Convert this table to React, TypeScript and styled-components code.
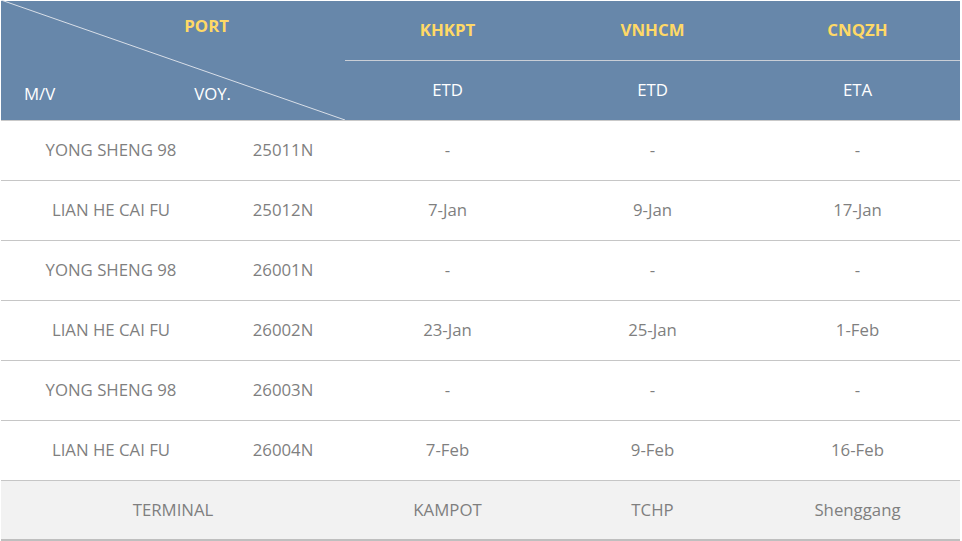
import React from "react";
import styled, { createGlobalStyle } from "styled-components";

const GlobalStyle = createGlobalStyle`
  html, body {
    margin: 0;
    padding: 0;
    background: #ffffff;
    font-family: "Open Sans", "Noto Sans", "Liberation Sans", sans-serif;
  }
`;

type Sailing = {
  vessel: string;
  voyage: string;
  khkpt: string;
  vnhcm: string;
  cnqzh: string;
};

const ports = [
  { code: "KHKPT", kind: "ETD", terminal: "KAMPOT" },
  { code: "VNHCM", kind: "ETD", terminal: "TCHP" },
  { code: "CNQZH", kind: "ETA", terminal: "Shenggang" },
];

const sailings: Sailing[] = [
  { vessel: "YONG SHENG 98", voyage: "25011N", khkpt: "-", vnhcm: "-", cnqzh: "-" },
  { vessel: "LIAN HE CAI FU", voyage: "25012N", khkpt: "7-Jan", vnhcm: "9-Jan", cnqzh: "17-Jan" },
  { vessel: "YONG SHENG 98", voyage: "26001N", khkpt: "-", vnhcm: "-", cnqzh: "-" },
  { vessel: "LIAN HE CAI FU", voyage: "26002N", khkpt: "23-Jan", vnhcm: "25-Jan", cnqzh: "1-Feb" },
  { vessel: "YONG SHENG 98", voyage: "26003N", khkpt: "-", vnhcm: "-", cnqzh: "-" },
  { vessel: "LIAN HE CAI FU", voyage: "26004N", khkpt: "7-Feb", vnhcm: "9-Feb", cnqzh: "16-Feb" },
];

export default function App() {
  return (
    <>
      <GlobalStyle />
      <Page>
        <Schedule>
          <SlashCell>
            <SlashLine viewBox="0 0 100 100" preserveAspectRatio="none">
              <line x1="0" y1="0" x2="100" y2="100" stroke="#d9dfe8" strokeWidth="1" vectorEffect="non-scaling-stroke" />
            </SlashLine>
            <SlashTop>PORT</SlashTop>
            <SlashBottom>
              <span>M/V</span>
              <span>VOY.</span>
            </SlashBottom>
          </SlashCell>
          {ports.map((p) => (
            <PortCell key={p.code}>{p.code}</PortCell>
          ))}
          {ports.map((p) => (
            <KindCell key={p.code + "-kind"}>{p.kind}</KindCell>
          ))}

          {sailings.map((s) => (
            <React.Fragment key={s.voyage}>
              <Cell>{s.vessel}</Cell>
              <Cell>{s.voyage}</Cell>
              <Cell>{s.khkpt}</Cell>
              <Cell>{s.vnhcm}</Cell>
              <Cell>{s.cnqzh}</Cell>
            </React.Fragment>
          ))}

          <FootCell $span={2}>TERMINAL</FootCell>
          {ports.map((p) => (
            <FootCell key={p.code + "-term"}>{p.terminal}</FootCell>
          ))}
        </Schedule>
      </Page>
    </>
  );
}

const Page = styled.div`
  padding: 1px 0 0 1px;
`;

const Schedule = styled.div`
  display: grid;
  grid-template-columns: 220px 124px 205px 205px 205px;
  grid-auto-rows: 60px;
  width: 960px;
  font-size: 16.8px;
`;

const SlashCell = styled.div`
  grid-column: span 2;
  grid-row: span 2;
  position: relative;
  display: grid;
  grid-template-rows: 1fr 1fr;
  background: #6787aa;
  border-bottom: 1px solid #c9c9c9;
  color: #ffffff;
`;

const SlashLine = styled.svg`
  position: absolute;
  inset: -1px 0 -1px 0;
  width: 100%;
  height: calc(100% + 1px);
  pointer-events: none;
`;

const SlashTop = styled.div`
  display: flex;
  justify-content: flex-end;
  align-items: center;
  padding: 0 116px 10px 0;
  color: #ffd966;
  font-weight: 700;
`;

const SlashBottom = styled.div`
  display: flex;
  justify-content: space-between;
  align-items: center;
  padding: 7px 114px 0 23px;
`;

const PortCell = styled.div`
  display: flex;
  align-items: center;
  justify-content: center;
  padding-bottom: 2px;
  background: #6787aa;
  border-bottom: 1px solid #c9ced6;
  color: #ffd966;
  font-weight: 700;
`;

const KindCell = styled.div`
  display: flex;
  align-items: center;
  justify-content: center;
  padding-bottom: 2px;
  background: #6787aa;
  border-bottom: 1px solid #c9c9c9;
  color: #ffffff;
`;

const Cell = styled.div`
  display: flex;
  align-items: center;
  justify-content: center;
  padding-bottom: 2px;
  border-bottom: 1px solid #c6c6c6;
  color: #7f7f7f;
`;

const FootCell = styled.div<{ $span?: number }>`
  grid-column: span ${({ $span }) => $span ?? 1};
  display: flex;
  align-items: center;
  justify-content: center;
  padding-bottom: 1px;
  background: #f2f2f2;
  border-bottom: 2px solid #bfbfbf;
  color: #7f7f7f;
`;
